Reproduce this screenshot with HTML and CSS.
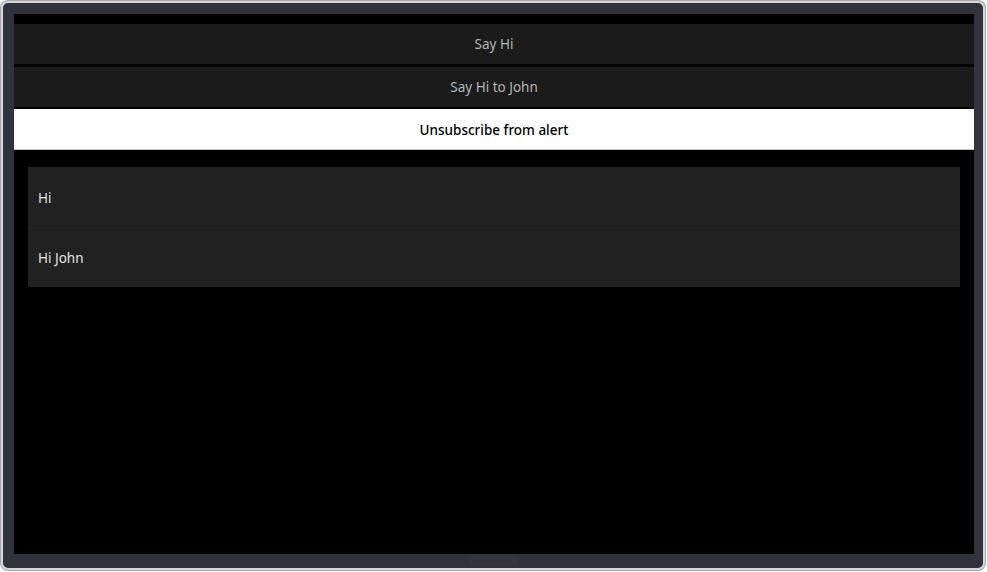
FILE: index.html
```html
<!DOCTYPE html>
<html>
<head>
<meta charset="utf-8">
<link rel="stylesheet" href="styles.css">
</head>
<body>
<div class="device">
  <div class="screen">
    <div class="btn dark">Say Hi</div>
    <div class="btn dark second">Say Hi to John</div>
    <div class="btn light">Unsubscribe from alert</div>
    <div class="list">
      <div class="row">Hi</div>
      <div class="row">Hi John</div>
    </div>
  </div>
  <div class="bezel-bottom"><div class="home"></div></div>
</div>
</body>
</html>
```
FILE: styles.css
```css
html, body {
  margin: 0;
  padding: 0;
  background: #ffffff;
}
body {
  padding: 1px;
  font-family: "Noto Sans", "Open Sans", sans-serif;
}
.device {
  border: 2px solid #d6d6d6;
  box-shadow: 0 0 0 1px #a6a6a6;
  border-radius: 7px;
  background: #30333b;
  padding: 11px 9px 0 11px;
  box-sizing: content-box;
  display: flex;
  flex-direction: column;
  width: 960px;
  height: 554px;
}
.screen {
  width: 960px;
  height: 540px;
  background: #000;
  padding-top: 10px;
  box-sizing: border-box;
  display: flex;
  flex-direction: column;
}
.btn {
  height: 40px;
  box-sizing: border-box;
  display: flex;
  align-items: center;
  justify-content: center;
  font-size: 13.5px;
  flex: none;
}
.dark {
  background: #1b1b1b;
  color: #b4b4b4;
  margin-bottom: 3px;
}
.dark.second {
  margin-bottom: 2px;
}
.light {
  background: #ffffff;
  color: #000000;
  height: 41px;
  padding-top: 1px;
  border-bottom: 1px solid #c6c6c6;
  font-weight: 500;
}
.list {
  margin: 17px 14px 0 14px;
  background: #212121;
}
.row {
  height: 60px;
  display: flex;
  align-items: center;
  padding-left: 10px;
  padding-top: 1px;
  color: #e2e2e2;
  font-size: 13.5px;
  box-sizing: border-box;
}
.row + .row {
  border-top: 1px solid #262626;
}
.bezel-bottom {
  height: 14px;
  display: flex;
  justify-content: center;
}
.home {
  width: 47px;
  height: 11px;
  background: #33363e;
  margin-left: -2px;
}
```
